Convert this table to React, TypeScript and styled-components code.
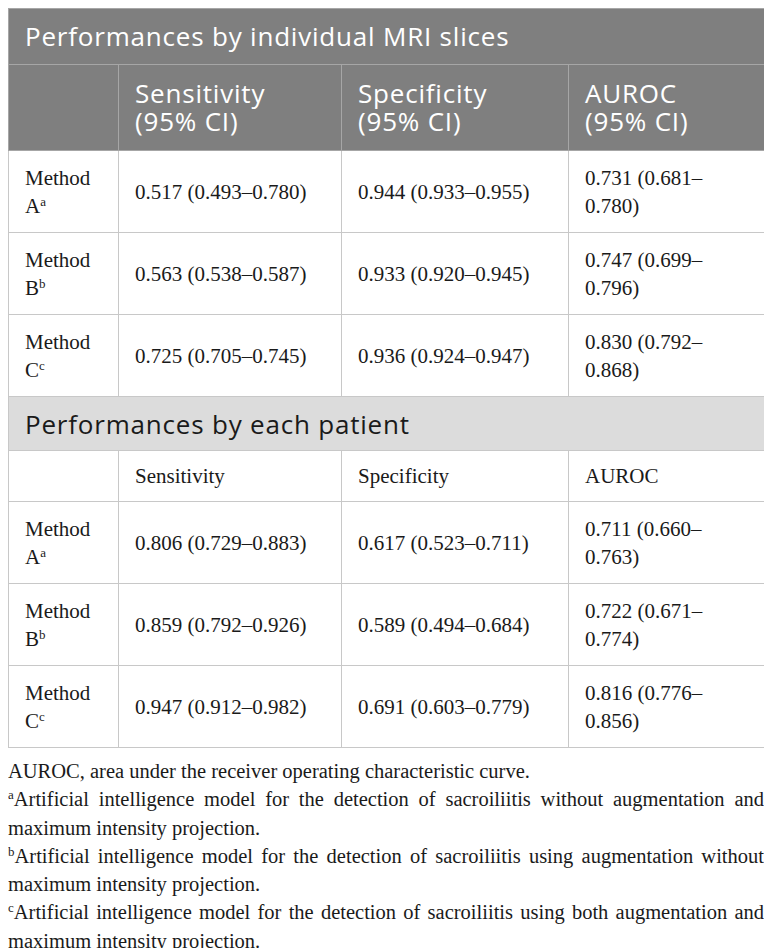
import styled, { createGlobalStyle } from 'styled-components'

const GlobalStyle = createGlobalStyle`
    body {
        margin: 8px;
        background: #ffffff;
        color: #1a1a1a;
    }
`

const Table = styled.table`
    width: 100%;
    border-collapse: collapse;
    table-layout: fixed;
    border: 1px solid #c8c8c8;
`

const SectionCell = styled.th<{ $dark?: boolean }>`
    text-align: left;
    font-family: "Open Sans", "Liberation Sans", sans-serif;
    font-weight: 400;
    font-size: 26px;
    letter-spacing: 0.8px;
    line-height: 30px;
    padding: ${p => (p.$dark ? '12px 16px 13px' : '12px 16px 11px')};
    background: ${p => (p.$dark ? '#7f7f7f' : '#dcdcdc')};
    color: ${p => (p.$dark ? '#ffffff' : '#1a1a1a')};
    border: 1px solid ${p => (p.$dark ? '#a6a6a6' : '#c8c8c8')};
`

const HeadCell = styled.th`
    text-align: left;
    vertical-align: top;
    font-family: "Open Sans", "Liberation Sans", sans-serif;
    font-weight: 400;
    font-size: 26px;
    letter-spacing: 0.8px;
    line-height: 28px;
    padding: 14px 16px 15px;
    background: #7f7f7f;
    color: #ffffff;
    border: 1px solid #a6a6a6;
`

const SubHeadCell = styled.th`
    text-align: left;
    font-family: "Liberation Serif", "Times New Roman", serif;
    font-weight: 400;
    font-size: 21px;
    line-height: 28px;
    padding: 11px 16px;
    border: 1px solid #c8c8c8;
`

const Cell = styled.td`
    text-align: left;
    vertical-align: middle;
    font-family: "Liberation Serif", "Times New Roman", serif;
    font-size: 21px;
    line-height: 28px;
    padding: 13px 15px 12px 16px;
    border: 1px solid #c8c8c8;
`

const Sup = styled.span`
    font-size: 13px;
    line-height: 1;
    position: relative;
    top: -7px;
`

const Notes = styled.div`
    margin-top: 9px;
    font-family: "Liberation Serif", "Times New Roman", serif;
    font-size: 20.5px;
    line-height: 28.3px;
    color: #1a1a1a;
`

const Note = styled.p`
    margin: 0;
    text-align: justify;
`

const colWidths = [110, 223, 227, 196]

const sliceRows = [
    { m: 'A', s: 'a', v: ['0.517 (0.493–0.780)', '0.944 (0.933–0.955)', '0.731 (0.681–0.780)'] },
    { m: 'B', s: 'b', v: ['0.563 (0.538–0.587)', '0.933 (0.920–0.945)', '0.747 (0.699–0.796)'] },
    { m: 'C', s: 'c', v: ['0.725 (0.705–0.745)', '0.936 (0.924–0.947)', '0.830 (0.792–0.868)'] },
]

const patientRows = [
    { m: 'A', s: 'a', v: ['0.806 (0.729–0.883)', '0.617 (0.523–0.711)', '0.711 (0.660–0.763)'] },
    { m: 'B', s: 'b', v: ['0.859 (0.792–0.926)', '0.589 (0.494–0.684)', '0.722 (0.671–0.774)'] },
    { m: 'C', s: 'c', v: ['0.947 (0.912–0.982)', '0.691 (0.603–0.779)', '0.816 (0.776–0.856)'] },
]

const DataRows = ({ rows }: { rows: typeof sliceRows }) => (
    <>
        {rows.map(r => (
            <tr key={r.m}>
                <Cell>
                    Method
                    <br />
                    {r.m}
                    <Sup>{r.s}</Sup>
                </Cell>
                {r.v.map((x, i) => (
                    <Cell key={i}>{i === 2 ? x.replace('–', '–\u200b') : x}</Cell>
                ))}
            </tr>
        ))}
    </>
)

const App = () => {
    return (
        <>
            <GlobalStyle />
            <Table>
                <colgroup>
                    {colWidths.map((w, i) => (
                        <col key={i} style={{ width: w }} />
                    ))}
                </colgroup>
                <tbody>
                    <tr>
                        <SectionCell $dark colSpan={4}>Performances by individual MRI slices</SectionCell>
                    </tr>
                    <tr>
                        <HeadCell />
                        <HeadCell>Sensitivity<br />(95% CI)</HeadCell>
                        <HeadCell>Specificity<br />(95% CI)</HeadCell>
                        <HeadCell>AUROC<br />(95% CI)</HeadCell>
                    </tr>
                    <DataRows rows={sliceRows} />
                    <tr>
                        <SectionCell colSpan={4}>Performances by each patient</SectionCell>
                    </tr>
                    <tr>
                        <SubHeadCell />
                        <SubHeadCell>Sensitivity</SubHeadCell>
                        <SubHeadCell>Specificity</SubHeadCell>
                        <SubHeadCell>AUROC</SubHeadCell>
                    </tr>
                    <DataRows rows={patientRows} />
                </tbody>
            </Table>
            <Notes>
                <Note>AUROC, area under the receiver operating characteristic curve.</Note>
                <Note>
                    <Sup>a</Sup>Artificial intelligence model for the detection of sacroiliitis without augmentation and maximum intensity projection.
                </Note>
                <Note>
                    <Sup>b</Sup>Artificial intelligence model for the detection of sacroiliitis using augmentation without maximum intensity projection.
                </Note>
                <Note>
                    <Sup>c</Sup>Artificial intelligence model for the detection of sacroiliitis using both augmentation and maximum intensity projection.
                </Note>
            </Notes>
        </>
    )
}

export default App
